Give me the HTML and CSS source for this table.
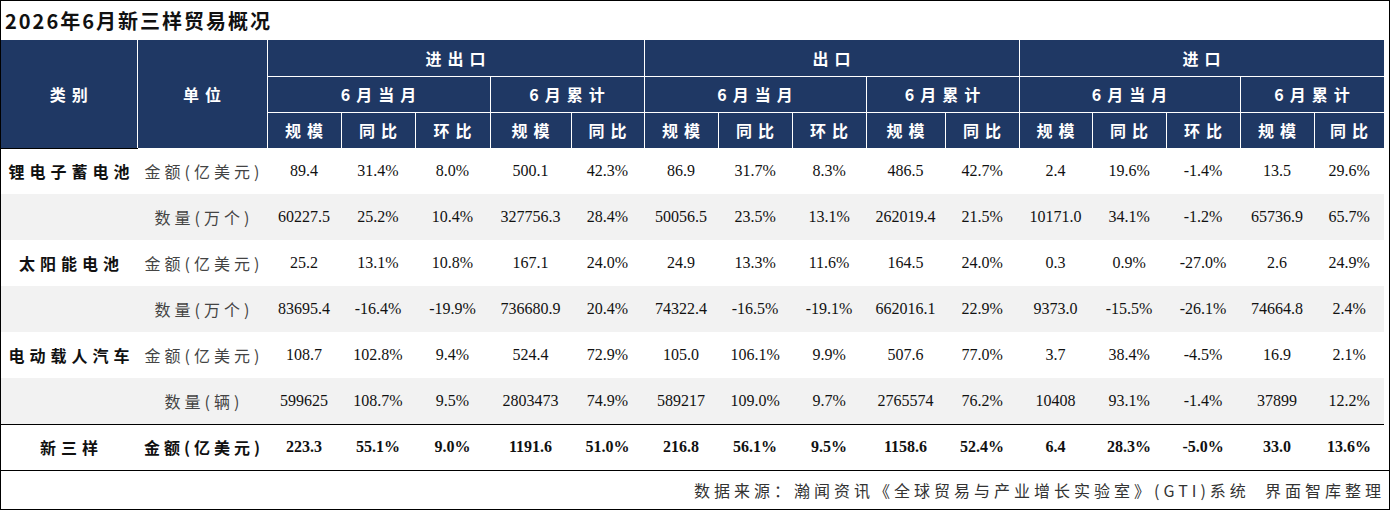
FILE: index.html
```html
<!DOCTYPE html>
<html lang="zh">
<head>
<meta charset="utf-8">
<title>2026年6月新三样贸易概况</title>
<link rel="stylesheet" href="styles.css">
</head>
<body>
<div class="frame">
  <div class="title">2026年6月新三样贸易概况</div>
  <table class="grid">
    <colgroup>
      <col class="w136"><col class="w130">
      <col class="w74"><col class="w74"><col class="w75"><col class="w81"><col class="w73">
      <col class="w74"><col class="w74"><col class="w74"><col class="w79"><col class="w74">
      <col class="w73"><col class="w74"><col class="w74"><col class="w74"><col class="w70">
    </colgroup>
    <thead>
      <tr class="hrow">
        <th rowspan="3" class="corner">类别</th>
        <th rowspan="3">单位</th>
        <th colspan="5">进出口</th>
        <th colspan="5">出口</th>
        <th colspan="5">进口</th>
      </tr>
      <tr class="hrow">
        <th colspan="3">6月当月</th>
        <th colspan="2">6月累计</th>
        <th colspan="3">6月当月</th>
        <th colspan="2">6月累计</th>
        <th colspan="3">6月当月</th>
        <th colspan="2">6月累计</th>
      </tr>
      <tr class="hrow">
        <th>规模</th><th>同比</th><th>环比</th><th>规模</th><th>同比</th>
        <th>规模</th><th>同比</th><th>环比</th><th>规模</th><th>同比</th>
        <th>规模</th><th>同比</th><th>环比</th><th>规模</th><th>同比</th>
      </tr>
    </thead>
    <tbody>
      <tr class="drow">
        <td class="cat">锂电子蓄电池</td><td class="unit">金额(亿美元)</td>
        <td>89.4</td><td>31.4%</td><td>8.0%</td><td>500.1</td><td>42.3%</td>
        <td>86.9</td><td>31.7%</td><td>8.3%</td><td>486.5</td><td>42.7%</td>
        <td>2.4</td><td>19.6%</td><td>-1.4%</td><td>13.5</td><td>29.6%</td>
      </tr>
      <tr class="drow alt">
        <td class="cat"></td><td class="unit">数量(万个)</td>
        <td>60227.5</td><td>25.2%</td><td>10.4%</td><td>327756.3</td><td>28.4%</td>
        <td>50056.5</td><td>23.5%</td><td>13.1%</td><td>262019.4</td><td>21.5%</td>
        <td>10171.0</td><td>34.1%</td><td>-1.2%</td><td>65736.9</td><td>65.7%</td>
      </tr>
      <tr class="drow">
        <td class="cat">太阳能电池</td><td class="unit">金额(亿美元)</td>
        <td>25.2</td><td>13.1%</td><td>10.8%</td><td>167.1</td><td>24.0%</td>
        <td>24.9</td><td>13.3%</td><td>11.6%</td><td>164.5</td><td>24.0%</td>
        <td>0.3</td><td>0.9%</td><td>-27.0%</td><td>2.6</td><td>24.9%</td>
      </tr>
      <tr class="drow alt">
        <td class="cat"></td><td class="unit">数量(万个)</td>
        <td>83695.4</td><td>-16.4%</td><td>-19.9%</td><td>736680.9</td><td>20.4%</td>
        <td>74322.4</td><td>-16.5%</td><td>-19.1%</td><td>662016.1</td><td>22.9%</td>
        <td>9373.0</td><td>-15.5%</td><td>-26.1%</td><td>74664.8</td><td>2.4%</td>
      </tr>
      <tr class="drow">
        <td class="cat">电动载人汽车</td><td class="unit">金额(亿美元)</td>
        <td>108.7</td><td>102.8%</td><td>9.4%</td><td>524.4</td><td>72.9%</td>
        <td>105.0</td><td>106.1%</td><td>9.9%</td><td>507.6</td><td>77.0%</td>
        <td>3.7</td><td>38.4%</td><td>-4.5%</td><td>16.9</td><td>2.1%</td>
      </tr>
      <tr class="drow alt">
        <td class="cat"></td><td class="unit">数量(辆)</td>
        <td>599625</td><td>108.7%</td><td>9.5%</td><td>2803473</td><td>74.9%</td>
        <td>589217</td><td>109.0%</td><td>9.7%</td><td>2765574</td><td>76.2%</td>
        <td>10408</td><td>93.1%</td><td>-1.4%</td><td>37899</td><td>12.2%</td>
      </tr>
      <tr class="drow total">
        <td class="cat">新三样</td><td class="unit">金额(亿美元)</td>
        <td>223.3</td><td>55.1%</td><td>9.0%</td><td>1191.6</td><td>51.0%</td>
        <td>216.8</td><td>56.1%</td><td>9.5%</td><td>1158.6</td><td>52.4%</td>
        <td>6.4</td><td>28.3%</td><td>-5.0%</td><td>33.0</td><td>13.6%</td>
      </tr>
    </tbody>
  </table>
  <div class="footer">数据来源：瀚闻资讯《全球贸易与产业增长实验室》(GTI)系统&nbsp;&nbsp;界面智库整理</div>
</div>
</body>
</html>
```

FILE: styles.css
```css
html, body {
  margin: 0;
  padding: 0;
  background: #fff;
}

.frame {
  width: 1390px;
  height: 510px;
  box-sizing: border-box;
  border: 1px solid #000;
  background: #fff;
  display: flex;
  flex-direction: column;
  overflow: hidden;
}

.title {
  height: 39px;
  line-height: 40px;
  padding-left: 4px;
  font-family: "Noto Sans CJK SC", sans-serif;
  font-weight: 700;
  font-size: 20px;
  letter-spacing: 2px;
  color: #111;
  flex: none;
}

.grid {
  width: 1383px;
  table-layout: fixed;
  border-collapse: collapse;
  flex: none;
}

.w136 { width: 136px; }
.w130 { width: 130px; }
.w81 { width: 81px; }
.w79 { width: 79px; }
.w75 { width: 75px; }
.w74 { width: 74px; }
.w73 { width: 73px; }
.w70 { width: 70px; }

.grid th {
  background: #1f3864;
  color: #fff;
  font-family: "Noto Sans CJK SC", sans-serif;
  font-weight: 700;
  font-size: 16px;
  letter-spacing: 6px;
  padding: 0 0 0 6px;
  text-align: center;
  vertical-align: middle;
  border-right: 1px solid #fff;
  border-bottom: 1px solid #fff;
  border-top: none;
  border-left: none;
}

.grid th.corner {
  border-bottom: 1px solid #000;
}

.hrow {
  height: 36px;
}

.drow {
  height: 46px;
}

.drow.alt td {
  background: #f2f2f2;
}

.grid td {
  padding: 0;
  text-align: center;
  vertical-align: middle;
  font-family: "Liberation Serif", "Noto Sans CJK SC", serif;
  font-size: 16px;
  color: #111;
  white-space: nowrap;
}

.grid td.cat {
  font-family: "Noto Sans CJK SC", sans-serif;
  font-weight: 700;
  letter-spacing: 5px;
  padding-left: 5px;
  color: #111;
}

.grid td.unit {
  font-family: "Noto Sans CJK SC", sans-serif;
  letter-spacing: 4px;
  padding-left: 4px;
  color: #444;
}

.total td {
  border-top: 1px solid #000;
  font-weight: 700;
}

.total td.unit {
  font-weight: 700;
  color: #111;
}

.footer {
  flex: none;
  height: 38px;
  line-height: 38px;
  border-top: 1px solid #000;
  text-align: right;
  padding-right: 4px;
  font-family: "Noto Sans CJK SC", sans-serif;
  font-size: 16px;
  letter-spacing: 4px;
  color: #333;
}
```
